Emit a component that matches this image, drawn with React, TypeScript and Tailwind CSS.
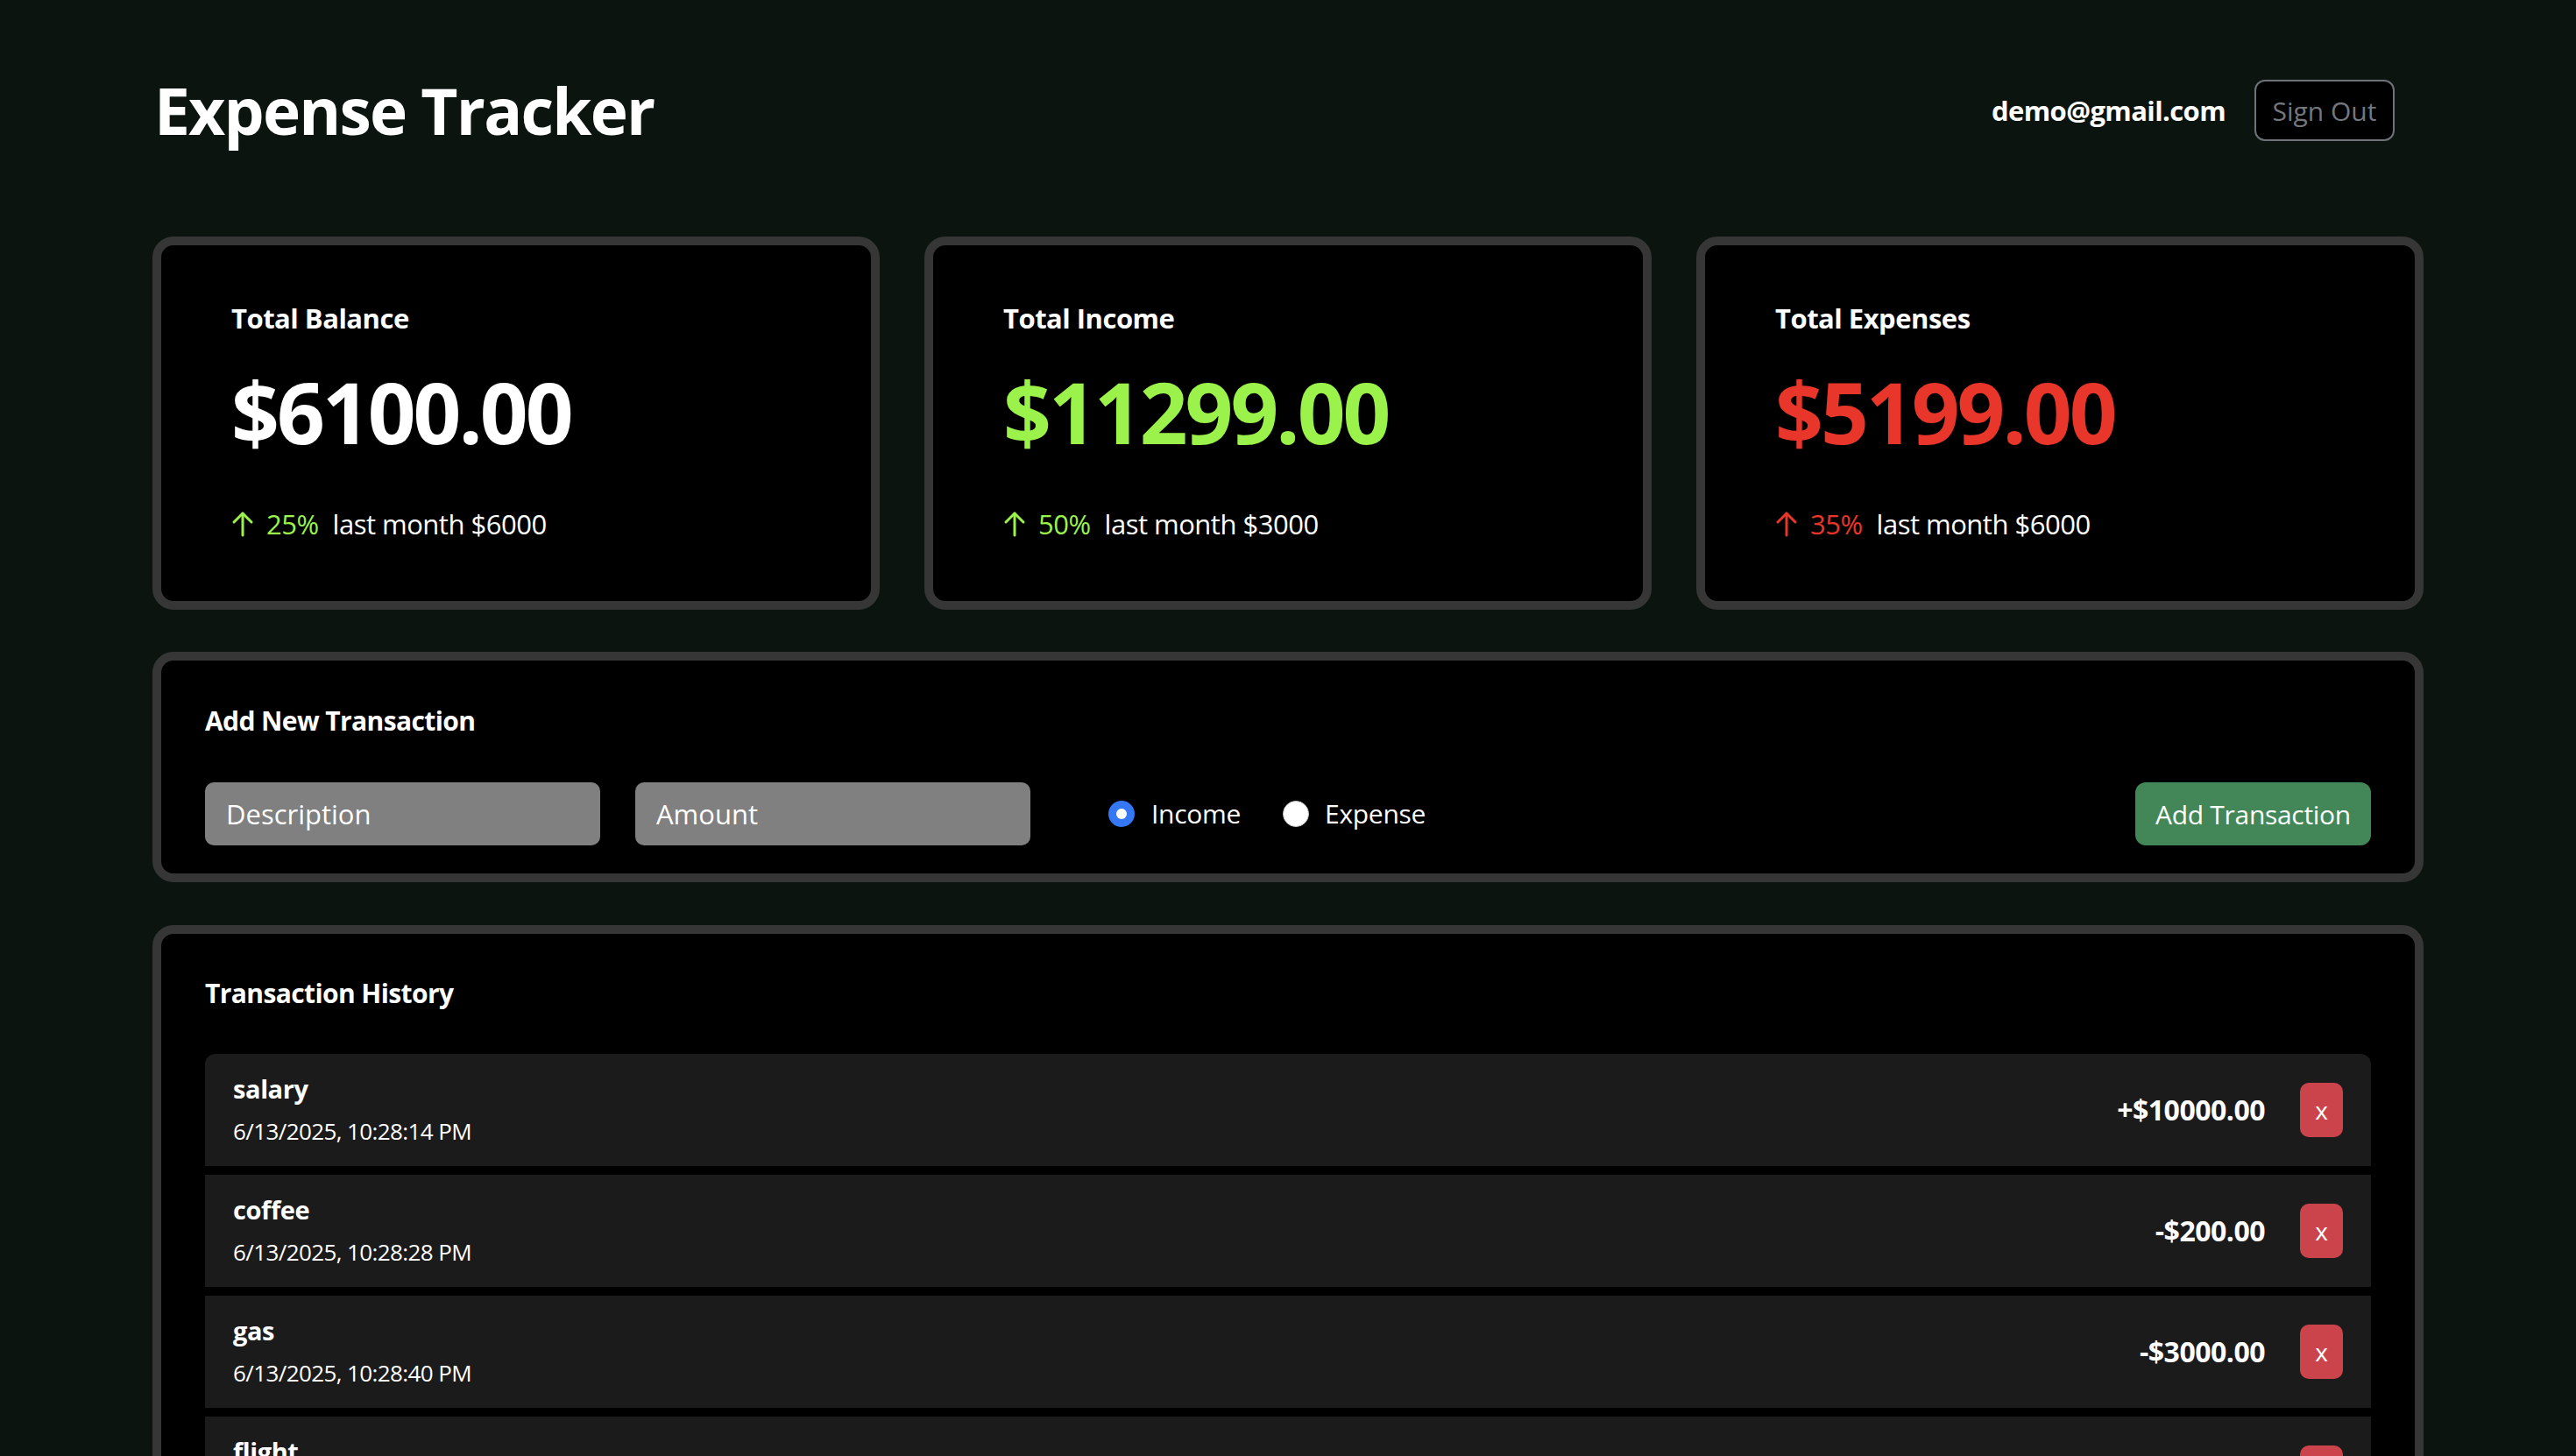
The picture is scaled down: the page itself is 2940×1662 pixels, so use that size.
import React from "react";

const rows = [
  { name: "salary", date: "6/13/2025, 10:28:14 PM", amount: "+$10000.00" },
  { name: "coffee", date: "6/13/2025, 10:28:28 PM", amount: "-$200.00" },
  { name: "gas", date: "6/13/2025, 10:28:40 PM", amount: "-$3000.00" },
  { name: "flight", date: "6/13/2025, 10:28:52 PM", amount: "-$1999.00" },
  { name: "bonus", date: "6/13/2025, 10:29:05 PM", amount: "+$1299.00" },
];

function UpArrow({ className }: { className: string }) {
  return (
    <svg
      width="26"
      height="30"
      viewBox="0 0 26 30"
      fill="none"
      stroke="currentColor"
      strokeWidth="3"
      strokeLinecap="round"
      strokeLinejoin="round"
      className={className}
    >
      <path d="M13 28V3" />
      <path d="M3 13L13 3l10 10" />
    </svg>
  );
}

function StatCard({
  title,
  amount,
  amountClass,
  pct,
  pctClass,
  last,
}: {
  title: string;
  amount: string;
  amountClass: string;
  pct: string;
  pctClass: string;
  last: string;
}) {
  return (
    <div className="h-[426px] rounded-[24px] border-[10px] border-[#363636] bg-black pl-[80px] pt-[63px]">
      <div className="text-[31px] leading-[40px] font-bold tracking-[-0.5px] text-white">{title}</div>
      <div className={`mt-[39px] text-[96px] leading-[96px] font-bold tracking-[-3px] ${amountClass}`}>{amount}</div>
      <div className="mt-[60px] flex items-center text-[31px] leading-[40px] tracking-[-0.5px]">
        <UpArrow className={pctClass} />
        <span className={`ml-[14px] ${pctClass}`}>{pct}</span>
        <span className="ml-[16px] text-white">{last}</span>
      </div>
    </div>
  );
}

export default function App() {
  return (
    <div className="min-h-screen bg-[#0b140e] font-['Open_Sans',sans-serif] text-white">
      <div className="px-[174px] pt-[91px] pb-[80px]">
        <header className="flex h-[70px] items-center justify-between pl-[2px] pr-[33px]">
          <h1 className="text-[73px] leading-[80px] font-bold tracking-[-1.8px] text-white">Expense Tracker</h1>
          <div className="flex items-center gap-[33px]">
            <span className="text-[31px] leading-[40px] font-bold tracking-[-0.6px] text-white">demo@gmail.com</span>
            <button className="flex h-[70px] w-[160px] items-center justify-center rounded-[12px] border-2 border-[#6f7278] bg-black text-[30px] text-[#74777d]">
              Sign Out
            </button>
          </div>
        </header>

        <div className="mt-[109px] grid grid-cols-3 gap-[51px]">
          <StatCard
            title="Total Balance"
            amount="$6100.00"
            amountClass="text-white"
            pct="25%"
            pctClass="text-[#9bf24a]"
            last="last month $6000"
          />
          <StatCard
            title="Total Income"
            amount="$11299.00"
            amountClass="text-[#9bf24a]"
            pct="50%"
            pctClass="text-[#9bf24a]"
            last="last month $3000"
          />
          <StatCard
            title="Total Expenses"
            amount="$5199.00"
            amountClass="text-[#e8362a]"
            pct="35%"
            pctClass="text-[#e8362a]"
            last="last month $6000"
          />
        </div>

        <section className="mt-[48px] rounded-[24px] border-[10px] border-[#363636] bg-black px-[50px] pt-[49px] pb-[32px]">
          <h2 className="text-[30px] leading-[40px] font-bold tracking-[-0.6px] text-white">Add New Transaction</h2>
          <div className="mt-[50px] flex items-center">
            <input
              placeholder="Description"
              className="h-[72px] w-[451px] rounded-[10px] bg-[#808080] pl-[24px] text-[31px] text-white outline-none placeholder:text-white"
            />
            <input
              placeholder="Amount"
              className="ml-[40px] h-[72px] w-[451px] rounded-[10px] bg-[#808080] pl-[24px] text-[31px] text-white outline-none placeholder:text-white"
            />
            <div className="ml-[89px] flex items-center">
              <span className="flex h-[30px] w-[30px] items-center justify-center rounded-full bg-[#3478f6]">
                <span className="h-[12px] w-[12px] rounded-full bg-white" />
              </span>
              <span className="ml-[19px] text-[30px] leading-[40px] tracking-[-0.3px] text-white">Income</span>
              <span className="ml-[48px] h-[30px] w-[30px] rounded-full border border-[#c8c8c8] bg-white" />
              <span className="ml-[18px] text-[30px] leading-[40px] tracking-[-0.3px] text-white">Expense</span>
            </div>
            <button className="ml-auto flex h-[72px] w-[269px] items-center justify-center rounded-[12px] bg-[#438758] text-[30px] font-medium tracking-[-0.3px] text-white">
              Add Transaction
            </button>
          </div>
        </section>

        <section className="mt-[49px] rounded-[24px] border-[10px] border-[#363636] bg-black px-[50px] pt-[48px] pb-[50px]">
          <h2 className="text-[30px] leading-[40px] font-bold tracking-[-0.6px] text-white">Transaction History</h2>
          <div className="mt-[49px] flex flex-col gap-[10px] overflow-hidden rounded-t-[12px]">
            {rows.map((r) => (
              <div
                key={r.name}
                className="flex h-[128px] items-center justify-between bg-[#1b1b1b] pl-[32px] pr-[32px]"
              >
                <div className="flex flex-col gap-[12px]">
                  <span className="text-[29px] leading-[36px] font-bold tracking-[-0.4px] text-white">{r.name}</span>
                  <span className="text-[26px] leading-[36px] tracking-[-0.6px] text-white">{r.date}</span>
                </div>
                <div className="flex items-center">
                  <span className="text-[32px] leading-[40px] font-bold tracking-[-0.5px] text-white">{r.amount}</span>
                  <button className="ml-[40px] flex h-[62px] w-[49px] items-center justify-center rounded-[10px] bg-[#cc444b] text-[28px] text-white">
                    x
                  </button>
                </div>
              </div>
            ))}
          </div>
        </section>
      </div>
    </div>
  );
}
